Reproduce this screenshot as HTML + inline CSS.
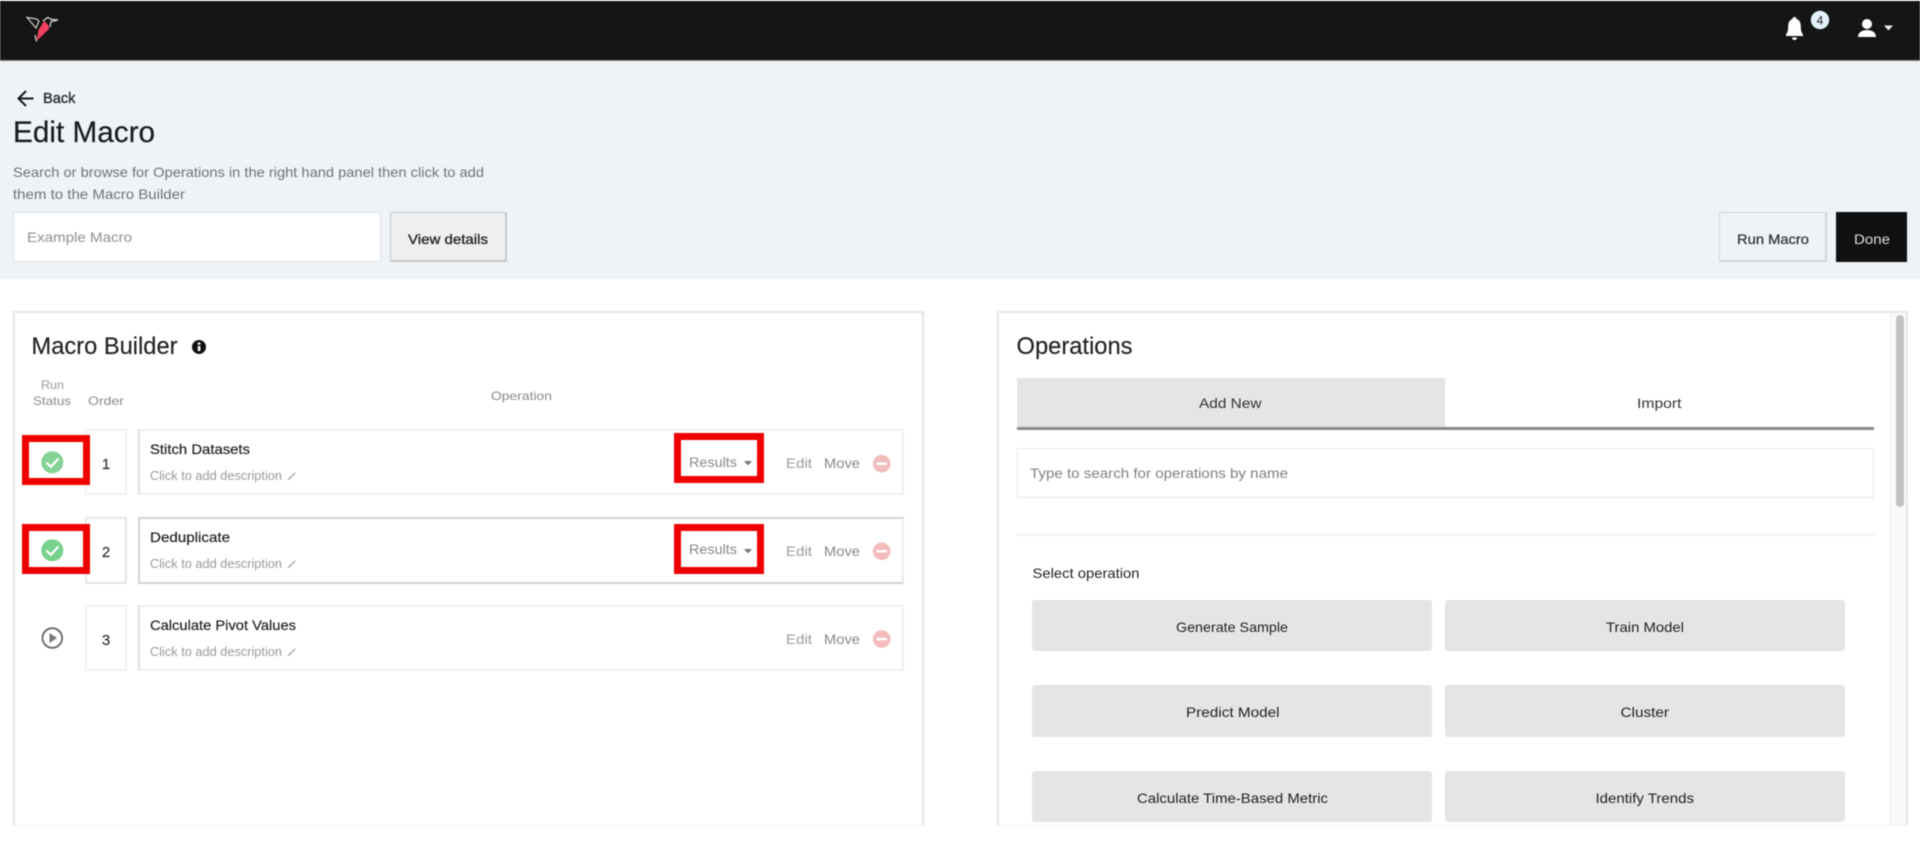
<!DOCTYPE html>
<html lang="en">
<head>
<meta charset="utf-8">
<title>Edit Macro</title>
<style>
html,body{margin:0;padding:0;width:1920px;height:844px;overflow:hidden;background:#fff}
#p{position:relative;width:1920px;height:844px;overflow:hidden;background:#fff;filter:blur(.55px);font-family:"Liberation Sans",sans-serif}
.b{position:absolute;box-sizing:border-box}
svg{position:absolute;left:0;top:0}
text{font-family:"Liberation Sans",sans-serif}
.order{left:85px;width:42px;border:2px solid #f0f0f0;background:#fff}
.op{left:138px;width:766px;background:#fff;border:2px solid #efefef;border-left-color:#dedede}
.red{border:7px solid #ee0000;background:transparent}
.g{background:#e5e5e5;border-radius:3px}
</style>
</head>
<body>
<div id="p">
  <!-- header -->
  <div class="b" style="left:0;top:1px;width:1920px;height:59px;background:#141514"></div>
  <div class="b" style="left:0;top:60px;width:1920px;height:1px;background:#888"></div>
  <div class="b" style="left:0;top:61px;width:1920px;height:218px;background:#edf3f7"></div>

  <!-- top controls -->
  <div class="b" style="left:13px;top:212px;width:368px;height:50px;background:#fff;border:1px solid #dde1e3"></div>
  <div class="b" style="left:390px;top:212px;width:117px;height:50px;background:#efefef;border:1px solid #c8c8c8;border-width:1px 2px 2px 1px"></div>
  <div class="b" style="left:1719px;top:212px;width:108px;height:50px;background:#eef3f7;border:1px solid #d2d6d9;border-width:1px 2px 2px 1px"></div>
  <div class="b" style="left:1836px;top:212px;width:71px;height:50px;background:#111"></div>

  <!-- macro builder panel -->
  <div class="b" style="left:13px;top:311px;width:911px;height:515px;border:2px solid #e4e4e4;border-bottom:1px solid #f2f2f2"></div>
  <div class="b order" style="top:429px;height:66px"></div>
  <div class="b op" style="top:429px;height:66px"></div>
  <div class="b order" style="top:517px;height:67px;border-color:#e4e4e4"></div>
  <div class="b op" style="top:517px;height:67px;border-color:#d2d2d2 #ececec #d2d2d2 #d2d2d2"></div>
  <div class="b order" style="top:605px;height:66px"></div>
  <div class="b op" style="top:605px;height:66px"></div>
  <div class="b red" style="left:22px;top:435px;width:68px;height:50px"></div>
  <div class="b red" style="left:22px;top:524px;width:68px;height:50px"></div>
  <div class="b red" style="left:674px;top:433px;width:90px;height:50px"></div>
  <div class="b red" style="left:674px;top:524px;width:90px;height:50px"></div>

  <!-- operations panel -->
  <div class="b" style="left:997px;top:311px;width:911px;height:515px;border:2px solid #e6e6e6;border-bottom:1px solid #f2f2f2"></div>
  <div class="b" style="left:1890px;top:313px;width:16px;height:512px;background:#fafafa;border-left:1px solid #eee"></div>
  <div class="b" style="left:1896px;top:315px;width:8px;height:192px;background:#c2c2c2;border-radius:4px"></div>
  <div class="b" style="left:1017px;top:378px;width:428px;height:49px;background:#e5e5e5"></div>
  <div class="b" style="left:1017px;top:427px;width:857px;height:3px;background:#8a8a8a"></div>
  <div class="b" style="left:1017px;top:448px;width:857px;height:50px;border:1px solid #e8e8e8;background:#fff"></div>
  <div class="b" style="left:1017px;top:534px;width:857px;height:2px;background:#efefef"></div>
  <div class="b g" style="left:1032px;top:600px;width:400px;height:51px"></div>
  <div class="b g" style="left:1445px;top:600px;width:400px;height:51px"></div>
  <div class="b g" style="left:1032px;top:685px;width:400px;height:52px"></div>
  <div class="b g" style="left:1445px;top:685px;width:400px;height:52px"></div>
  <div class="b g" style="left:1032px;top:771px;width:400px;height:51px"></div>
  <div class="b g" style="left:1445px;top:771px;width:400px;height:51px"></div>

  <svg width="1920" height="844" viewBox="0 0 1920 844" xmlns="http://www.w3.org/2000/svg">
    <!-- logo -->
    <path d="M27 17.500 L36.500 19 L39 21 L36 28 Z" fill="none" stroke="#cfcfcf" stroke-width="1.200"/>
    <path d="M44 21 L48.500 25 L49 29 L36.500 41 L38.500 30 Z" fill="#f0405f"/>
    <path d="M36.500 41.500 L35 35 M43 21 L47.500 17.500 L52 19.500 L58 20 L51 21.500 L50 27" fill="none" stroke="#dcdcdc" stroke-width="1.200"/>

    <!-- bell -->
    <path d="M1794.500 17 c1.200 0 2 .9 2 1.900 c3 1 4.300 3.800 4.300 7.600 c0 4.400 .9 6.200 2.200 8 v1.500 h-17 v-1.500 c1.300 -1.800 2.200 -3.600 2.200 -8 c0 -3.800 1.300 -6.600 4.300 -7.600 c0 -1 .8 -1.900 2 -1.900 z M1792 37.500 h5 c0 1.500 -1 2.500 -2.500 2.500 s-2.500 -1 -2.500 -2.500z" fill="#fff"/>
    <circle cx="1820" cy="20" r="9.200" fill="#e2f2fb"/>
    <text x="1820" y="24.500" font-size="12" fill="#222" text-anchor="middle">4</text>
    <!-- user -->
    <circle cx="1867" cy="24" r="5" fill="#fff"/>
    <path d="M1858 37 c0 -4.500 4 -7 9 -7 s9 2.500 9 7 z" fill="#fff"/>
    <path d="M1884 25.500 h9 l-4.500 5 z" fill="#eee"/>

    <!-- back arrow -->
    <path d="M33.500 98.500 H19 M26 91 L18.500 98.500 L26 106" fill="none" stroke="#1a1a1a" stroke-width="2"/>
    <text x="43" y="103" font-size="15" fill="#222" stroke="#222" stroke-width=".3" textLength="32.500" lengthAdjust="spacingAndGlyphs">Back</text>
    <text x="13" y="142" font-size="30" fill="#1b1c1d" stroke="#1b1c1d" stroke-width=".2" textLength="142" lengthAdjust="spacingAndGlyphs">Edit Macro</text>
    <text x="13" y="177" font-size="14" fill="#6d767b" textLength="471" lengthAdjust="spacingAndGlyphs">Search or browse for Operations in the right hand panel then click to add</text>
    <text x="13" y="199" font-size="14" fill="#6d767b" textLength="172" lengthAdjust="spacingAndGlyphs">them to the Macro Builder</text>
    <text x="27" y="242" font-size="14" fill="#8f8f8f" textLength="105" lengthAdjust="spacingAndGlyphs">Example Macro</text>
    <text x="408" y="244" font-size="14" fill="#222" stroke="#222" stroke-width=".3" textLength="80" lengthAdjust="spacingAndGlyphs">View details</text>
    <text x="1737" y="244" font-size="14" fill="#333" stroke="#333" stroke-width=".25" textLength="72" lengthAdjust="spacingAndGlyphs">Run Macro</text>
    <text x="1854" y="244" font-size="14" fill="#ddd" textLength="36" lengthAdjust="spacingAndGlyphs">Done</text>

    <!-- macro builder -->
    <text x="31.500" y="354" font-size="24" fill="#222" stroke="#222" stroke-width=".15" textLength="146" lengthAdjust="spacingAndGlyphs">Macro Builder</text>
    <circle cx="199" cy="347" r="7" fill="#111"/>
    <rect x="197.800" y="346" width="2.600" height="5" fill="#fff"/>
    <rect x="197.800" y="342.500" width="2.600" height="2.200" fill="#fff"/>
    <text x="41" y="389" font-size="12" fill="#999" textLength="23" lengthAdjust="spacingAndGlyphs">Run</text>
    <text x="33" y="405" font-size="12" fill="#888" textLength="38" lengthAdjust="spacingAndGlyphs">Status</text>
    <text x="88" y="405" font-size="12" fill="#888" textLength="36" lengthAdjust="spacingAndGlyphs">Order</text>
    <text x="491" y="400" font-size="12" fill="#888" textLength="61" lengthAdjust="spacingAndGlyphs">Operation</text>

    <!-- status icons -->
    <circle cx="52.300" cy="462.300" r="11" fill="#85d295"/>
    <path d="M46.500 462.500 L50.800 466.800 L58.500 458.500" fill="none" stroke="#fff" stroke-width="2.200"/>
    <circle cx="52.300" cy="550.300" r="11" fill="#78d28b"/>
    <path d="M46.500 550.500 L50.800 554.800 L58.500 546.500" fill="none" stroke="#fff" stroke-width="2.200"/>
    <circle cx="52.300" cy="638" r="9.800" fill="none" stroke="#666" stroke-width="1.800"/>
    <path d="M49.500 633 L57 638 L49.500 643 Z" fill="#777"/>

    <!-- order numbers -->
    <text x="106" y="469" font-size="15" fill="#333" stroke="#333" stroke-width=".2" text-anchor="middle">1</text>
    <text x="106" y="557" font-size="15" fill="#333" stroke="#333" stroke-width=".2" text-anchor="middle">2</text>
    <text x="106" y="645" font-size="15" fill="#333" stroke="#333" stroke-width=".2" text-anchor="middle">3</text>

    <!-- rows -->
    <text x="150" y="454" font-size="14" fill="#222" stroke="#222" stroke-width=".2" textLength="100" lengthAdjust="spacingAndGlyphs">Stitch Datasets</text>
    <text x="150" y="480" font-size="12.500" fill="#9a9a9a" textLength="132" lengthAdjust="spacingAndGlyphs">Click to add description</text>
    <path d="M288 480 L295 473" stroke="#aaa" stroke-width="1.300"/>
    <text x="150" y="542" font-size="14" fill="#222" stroke="#222" stroke-width=".2" textLength="80" lengthAdjust="spacingAndGlyphs">Deduplicate</text>
    <text x="150" y="568" font-size="12.500" fill="#9a9a9a" textLength="132" lengthAdjust="spacingAndGlyphs">Click to add description</text>
    <path d="M288 568 L295 561" stroke="#aaa" stroke-width="1.300"/>
    <text x="150" y="630" font-size="14" fill="#222" stroke="#222" stroke-width=".2" textLength="146" lengthAdjust="spacingAndGlyphs">Calculate Pivot Values</text>
    <text x="150" y="656" font-size="12.500" fill="#9a9a9a" textLength="132" lengthAdjust="spacingAndGlyphs">Click to add description</text>
    <path d="M288 656 L295 649" stroke="#aaa" stroke-width="1.300"/>

    <text x="689" y="467" font-size="14" fill="#888" textLength="48" lengthAdjust="spacingAndGlyphs">Results</text>
    <path d="M744 461 h8 l-4 4.500 z" fill="#777"/>
    <text x="689" y="554" font-size="14" fill="#888" textLength="48" lengthAdjust="spacingAndGlyphs">Results</text>
    <path d="M744 549 h8 l-4 4.500 z" fill="#777"/>

    <text x="786" y="468" font-size="14" fill="#999" textLength="26" lengthAdjust="spacingAndGlyphs">Edit</text>
    <text x="824" y="468" font-size="14" fill="#888" textLength="36" lengthAdjust="spacingAndGlyphs">Move</text>
    <text x="786" y="556" font-size="14" fill="#999" textLength="26" lengthAdjust="spacingAndGlyphs">Edit</text>
    <text x="824" y="556" font-size="14" fill="#888" textLength="36" lengthAdjust="spacingAndGlyphs">Move</text>
    <text x="786" y="644" font-size="14" fill="#999" textLength="26" lengthAdjust="spacingAndGlyphs">Edit</text>
    <text x="824" y="644" font-size="14" fill="#888" textLength="36" lengthAdjust="spacingAndGlyphs">Move</text>

    <circle cx="881.700" cy="463.700" r="8.800" fill="#f2bcbc"/><rect x="876.500" y="462.500" width="10.400" height="2.500" fill="#fff"/>
    <circle cx="881.700" cy="551.300" r="8.800" fill="#f2bcbc"/><rect x="876.500" y="550" width="10.400" height="2.500" fill="#fff"/>
    <circle cx="881.700" cy="639" r="8.800" fill="#f2bcbc"/><rect x="876.500" y="637.800" width="10.400" height="2.500" fill="#fff"/>

    <!-- operations -->
    <text x="1016.500" y="354" font-size="24" fill="#222" stroke="#222" stroke-width=".15" textLength="116" lengthAdjust="spacingAndGlyphs">Operations</text>
    <text x="1199" y="408" font-size="14" fill="#333" textLength="62.500" lengthAdjust="spacingAndGlyphs">Add New</text>
    <text x="1637" y="408" font-size="14" fill="#333" textLength="44.500" lengthAdjust="spacingAndGlyphs">Import</text>
    <text x="1030" y="478" font-size="14" fill="#808080" textLength="258" lengthAdjust="spacingAndGlyphs">Type to search for operations by name</text>
    <text x="1032.500" y="578" font-size="14" fill="#222" textLength="107" lengthAdjust="spacingAndGlyphs">Select operation</text>
    <text x="1176" y="632" font-size="14" fill="#222" textLength="112" lengthAdjust="spacingAndGlyphs">Generate Sample</text>
    <text x="1606" y="632" font-size="14" fill="#222" textLength="78" lengthAdjust="spacingAndGlyphs">Train Model</text>
    <text x="1186" y="717" font-size="14" fill="#222" textLength="93.500" lengthAdjust="spacingAndGlyphs">Predict Model</text>
    <text x="1620.500" y="717" font-size="14" fill="#222" textLength="48.500" lengthAdjust="spacingAndGlyphs">Cluster</text>
    <text x="1137" y="803" font-size="14" fill="#222" textLength="191" lengthAdjust="spacingAndGlyphs">Calculate Time-Based Metric</text>
    <text x="1595.500" y="803" font-size="14" fill="#222" textLength="98.500" lengthAdjust="spacingAndGlyphs">Identify Trends</text>
  </svg>
</div>
</body>
</html>
